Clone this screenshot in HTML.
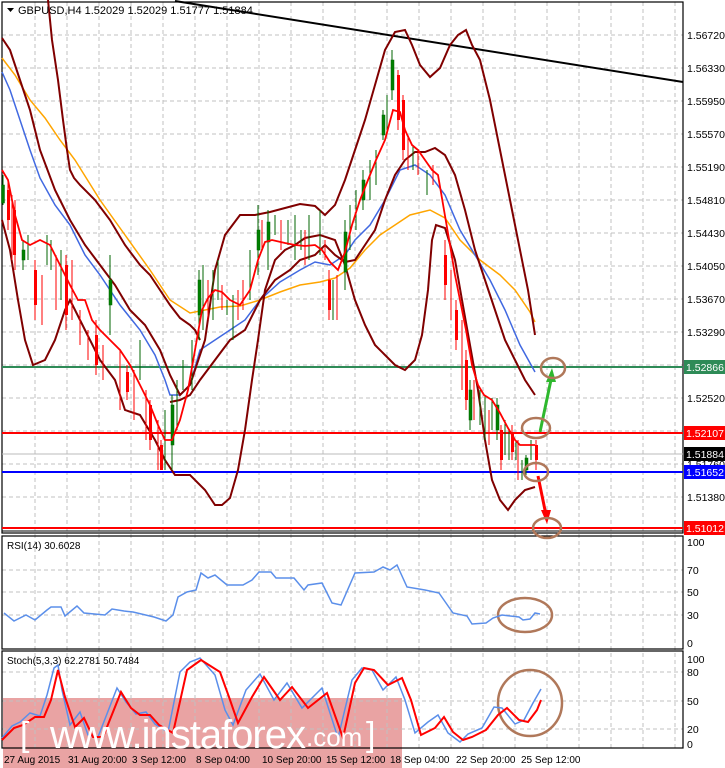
<!DOCTYPE html>
<html><head><meta charset="utf-8"><style>
html,body{margin:0;padding:0;background:#fff;}
svg{display:block;font-family:"Liberation Sans",sans-serif;}
</style></head><body>
<svg width="725" height="768" viewBox="0 0 725 768" xmlns="http://www.w3.org/2000/svg">
<rect width="725" height="768" fill="#fff"/>
<!-- watermark -->
<rect x="3" y="698" width="399" height="70" fill="#e9a3a3"/>
<g stroke="#c0c0c0" stroke-width="1" stroke-dasharray="4,3" fill="none">
<path d="M35 2V748M67 2V748M99 2V748M131 2V748M163 2V748M195 2V748M227 2V748M259 2V748M291 2V748M323 2V748M355 2V748M387 2V748M419 2V748M451 2V748M483 2V748M515 2V748M547 2V748M579 2V748M611 2V748M643 2V748M675 2V748"/>
<path d="M2 35H683M2 68H683M2 101H683M2 134H683M2 167H683M2 200H683M2 233H683M2 266H683M2 299H683M2 332H683M2 365H683M2 398H683M2 431H683M2 464H683M2 497H683"/>
<path d="M2 570H683M2 592H683M2 615H683M2 672H683M2 701H683M2 729H683"/>
</g>
<!-- frames -->
<g stroke="#000" stroke-width="1.2" fill="none">
<rect x="2" y="2" width="681" height="531"/>
<rect x="2" y="536" width="681" height="113"/>
<rect x="2" y="651" width="681" height="97"/>
</g>
<!-- horizontal levels -->
<line x1="2" y1="367" x2="683" y2="367" stroke="#2e8b57" stroke-width="2"/>
<line x1="2" y1="433" x2="683" y2="433" stroke="#f00" stroke-width="2"/>
<line x1="2" y1="454" x2="683" y2="454" stroke="#bbb" stroke-width="1"/>
<line x1="2" y1="472" x2="683" y2="472" stroke="#00f" stroke-width="2"/>
<line x1="2" y1="528" x2="683" y2="528" stroke="#f00" stroke-width="2"/>
<line x1="2" y1="531" x2="683" y2="531" stroke="#000" stroke-width="1"/>
<!-- trendline -->
<line x1="175" y1="1" x2="683" y2="82" stroke="#000" stroke-width="2"/>
<!-- MA orange -->
<polyline fill="none" stroke="#ffa500" stroke-width="1.5" points="2,58 15,75 30,100 45,118 60,140 75,160 100,200 125,235 150,270 170,300 190,313 205,310 220,307 240,306 260,300 280,292 300,285 320,282 335,278 350,268 365,250 380,235 395,225 410,215 430,210 445,218 460,240 480,260 500,275 515,290 530,312 535,322"/>
<!-- MA blue -->
<polyline fill="none" stroke="#4169e1" stroke-width="1.5" points="2,72 10,90 20,120 30,150 40,178 55,205 70,225 85,255 100,275 120,305 140,330 155,355 165,380 170,395 180,395 190,385 200,350 215,340 230,330 245,320 260,300 280,282 300,270 315,262 330,265 345,255 355,240 370,225 385,200 400,170 415,165 430,175 445,195 460,230 475,255 490,280 505,310 520,345 535,372"/>
<!-- Bollinger bands (dark red) -->
<g fill="none" stroke="#800000" stroke-width="2">
<polyline points="2,38 10,50 20,80 30,110 40,150 55,190 70,220 85,245 100,265 115,285 130,310 145,325 160,350 170,375 180,395 190,385 205,340 215,270 225,235 240,215 255,215 270,212 285,208 300,204 315,206 325,215 335,205 345,180 355,150 365,120 375,85 385,50 395,32 405,30 412,45 420,65 430,77 440,68 450,45 458,35 466,30 472,45 480,60 490,100 500,150 510,200 520,250 528,290 535,335"/>
<polyline points="48,0 52,40 58,80 63,120 67,150 70,170 74,178 80,185 95,200 110,220 125,245 140,265 150,275 160,290 170,305 180,318 190,325 195,330 200,340"/>
<polyline points="2,220 10,250 18,300 25,340 33,365 45,360 55,340 65,310 70,300 85,330 100,360 115,380 125,410 140,415 155,440 165,460 175,475 190,475 205,490 215,505 222,505 230,498 238,470 245,430 252,380 258,340 265,290 275,260 285,250 295,245 305,238 320,235 335,240 345,265 355,300 365,325 375,345 385,355 395,365 405,370 415,360 422,335 428,290 432,240 436,225 445,228 455,260 462,300 470,345 478,390 485,440 492,480 500,500 508,510 515,500 525,490 535,487"/>
<polyline points="170,402 180,400 190,395 200,380 215,360 230,340 245,330 260,300 275,280 290,270 300,260 315,255 325,245 335,255 345,262 355,260 365,245 375,230 385,200 395,175 405,160 415,152 425,152 435,148 445,155 455,175 465,210 475,250 485,280 495,310 505,340 515,360 525,380 535,395"/>
</g>
<!-- candles green -->
<g stroke="#006400" stroke-width="1">
<path d="M3 175V205M23 240V270M28 235V260M47 235V265M51 240V270M61 250V300M110 255V335M140 340V380M165 410V470M172 395V470M177 380V430M183 360V390M192 340V390M199 270V340M203 265V330M213 270V320M218 260V300M227 300V315M233 295V340M250 250V300M258 205V275M268 210V270M275 215V235M288 220V245M295 215V260M301 230V250M309 215V260M320 210V255M333 280V320M345 220V290M350 205V250M356 190V230M363 170V210M370 160V200M376 150V185M383 110V140M387 95V130M392 50V100M413 145V170M427 170V195M470 380V430M480 390V425M485 395V440M492 398V430M497 398V440M505 420V455M509 430V460M516 440V460M522 460V480M526 455V475M531 440V460"/>
</g>
<g fill="#008000" stroke="#006400" stroke-width="0.5">
<rect x="1.5" y="185" width="3" height="18"/><rect x="22" y="250" width="3" height="10"/><rect x="109" y="280" width="3" height="25"/><rect x="171" y="405" width="3" height="40"/><rect x="198" y="280" width="3" height="35"/><rect x="257" y="230" width="3" height="20"/><rect x="267" y="222" width="3" height="20"/><rect x="344" y="232" width="3" height="40"/><rect x="362" y="180" width="3" height="20"/><rect x="382" y="115" width="3" height="20"/><rect x="391" y="60" width="3" height="30"/><rect x="469" y="390" width="3" height="30"/><rect x="496" y="405" width="3" height="25"/><rect x="525" y="458" width="3" height="12"/>
</g>
<!-- candles red -->
<g stroke="#f00" stroke-width="1">
<path d="M8 180V230M12 195V260M15 200V270M35 260V320M42 275V325M56 255V310M66 255V330M72 260V320M80 310V345M88 330V360M96 320V375M103 345V380M120 350V410M127 365V400M134 370V420M146 390V440M150 400V450M158 420V470M161 440V470M208 280V320M222 285V310M238 290V320M243 280V310M262 220V250M281 220V250M305 230V265M325 240V260M329 270V320M337 275V320M398 70V130M403 95V160M408 135V170M418 150V175M433 165V185M445 240V300M451 270V320M456 300V350M462 320V390M466 350V410M474 380V420M489 410V445M501 425V470M512 425V460M518 440V480M536 440V470"/>
</g>
<g fill="#f00">
<rect x="7" y="190" width="3" height="30"/><rect x="13" y="210" width="3" height="45"/><rect x="34" y="270" width="3" height="35"/><rect x="65" y="265" width="3" height="50"/><rect x="95" y="335" width="3" height="30"/><rect x="126" y="372" width="3" height="20"/><rect x="149" y="405" width="3" height="35"/><rect x="160" y="445" width="3" height="25"/><rect x="328" y="280" width="3" height="30"/><rect x="397" y="75" width="3" height="45"/><rect x="402" y="100" width="3" height="50"/><rect x="444" y="255" width="3" height="30"/><rect x="455" y="310" width="3" height="30"/><rect x="465" y="360" width="3" height="40"/><rect x="500" y="430" width="3" height="30"/><rect x="511" y="432" width="3" height="20"/><rect x="535" y="445" width="3" height="15"/>
</g>
<!-- fast MA red -->
<polyline fill="none" stroke="#f00" stroke-width="1.8" points="2,170 8,180 15,215 22,240 30,245 40,240 50,245 55,255 60,265 70,285 78,300 85,300 92,320 100,330 110,340 120,350 130,365 140,385 150,405 158,425 165,440 172,440 180,420 188,390 195,350 202,310 208,298 215,290 222,292 230,300 240,305 250,290 258,260 265,242 272,240 285,243 295,245 305,246 315,245 322,250 330,262 338,270 345,252 352,225 360,200 368,180 376,160 385,140 393,110 400,112 405,130 412,145 418,150 425,160 432,170 438,175 444,210 450,245 455,275 460,300 466,330 472,365 478,385 484,395 492,400 500,413 508,428 515,440 520,445 528,445 535,445"/>
<!-- labels right -->
<g font-size="10.5" fill="#000">
<text x="687" y="39">1.56720</text><text x="687" y="72">1.56330</text><text x="687" y="105">1.55950</text><text x="687" y="138">1.55570</text><text x="687" y="171">1.55190</text><text x="687" y="204">1.54810</text><text x="687" y="237">1.54430</text><text x="687" y="270">1.54050</text><text x="687" y="303">1.53670</text><text x="687" y="336">1.53290</text><text x="687" y="402">1.52520</text><text x="687" y="468">1.51760</text><text x="687" y="501">1.51380</text>
</g>
<g font-size="10.5">
<rect x="684" y="360" width="41" height="14" fill="#2e8b57"/><text x="686" y="371" fill="#fff">1.52866</text>
<rect x="684" y="426" width="41" height="14" fill="#f00"/><text x="686" y="437" fill="#fff">1.52107</text>
<rect x="684" y="447" width="41" height="14" fill="#000"/><text x="686" y="458" fill="#fff">1.51884</text>
<rect x="684" y="465" width="41" height="14" fill="#00f"/><text x="686" y="476" fill="#fff">1.51652</text>
<rect x="684" y="521" width="41" height="14" fill="#f00"/><text x="686" y="532" fill="#fff">1.51012</text>
</g>
<g font-size="10.5" fill="#000">
<text x="687" y="546">100</text><text x="687" y="574">70</text><text x="687" y="596">50</text><text x="687" y="619">30</text><text x="687" y="647">0</text>
<text x="687" y="663">100</text><text x="687" y="676">80</text><text x="687" y="705">50</text><text x="687" y="733">20</text><text x="687" y="748">0</text>
</g>
<!-- header -->
<path d="M7 8H14L10.5 12Z" fill="#000"/>
<text x="18" y="14" font-size="11" fill="#000">GBPUSD,H4  1.52029 1.52029 1.51777 1.51884</text>
<!-- arrows & circles -->
<g fill="none" stroke="#2eb82e" stroke-width="3"><line x1="540" y1="432" x2="552" y2="375"/></g>
<path d="M552 368L546 382L556 382Z" fill="#2eb82e"/>
<g fill="none" stroke="#f00" stroke-width="3"><line x1="538" y1="476" x2="546" y2="515"/></g>
<path d="M547 524L541 510L551 510Z" fill="#f00"/>
<g fill="none" stroke="#b0785a" stroke-width="2.5">
<ellipse cx="553" cy="368" rx="12" ry="10"/>
<ellipse cx="536" cy="428" rx="14" ry="10"/>
<ellipse cx="536" cy="472" rx="12" ry="9"/>
<ellipse cx="547" cy="528" rx="14" ry="10"/>
<ellipse cx="525" cy="615" rx="27" ry="17"/>
<ellipse cx="530" cy="703" rx="32" ry="33"/>
</g>
<!-- RSI -->
<text x="7" y="549" font-size="10" fill="#000">RSI(14) 30.6028</text>
<polyline fill="none" stroke="#5b8fea" stroke-width="1.5" points="4,613 14,621 26,615 35,620 47,610 51,607 61,607 65,616 77,606 84,613 105,615 112,609 124,611 133,612 154,617 166,621 173,615 178,597 187,592 196,590 201,573 208,578 215,575 227,585 243,585 252,580 259,572 271,572 276,578 294,578 304,590 308,585 322,583 332,603 341,605 355,573 374,572 383,567 390,570 397,565 407,587 425,590 439,593 453,613 467,616 472,624 486,623 493,618 502,615 519,617 523,620 530,619 535,613 540,614"/>
<!-- Stoch -->
<text x="7" y="664" font-size="10" fill="#000">Stoch(5,3,3) 62.2781 50.7484</text>
<polyline fill="none" stroke="#5b8fea" stroke-width="1.5" points="2,738 12,726 20,722 30,713 40,716 47,695 54,668 58,665 62,690 70,725 80,712 88,735 98,737 117,688 126,702 136,714 146,712 155,724 168,732 180,672 190,662 200,658 215,675 225,710 233,725 246,690 260,674 274,700 287,683 302,708 322,688 338,738 352,680 362,668 372,670 383,690 396,677 405,700 415,733 428,722 438,715 448,733 460,742 468,734 482,728 494,707 502,708 515,724 524,720 533,703 541,689"/>
<polyline fill="none" stroke="#f00" stroke-width="2" points="2,740 14,728 23,725 35,717 44,717 51,700 58,670 65,697 75,727 84,718 93,737 103,737 121,692 131,708 140,715 150,715 159,725 173,733 187,670 201,660 220,672 229,697 238,723 252,697 264,677 280,700 292,687 308,708 327,693 343,738 355,683 364,668 374,670 388,685 402,678 411,700 421,735 435,728 444,717 453,732 463,740 472,737 486,730 498,715 507,708 519,720 528,722 537,710 541,700"/>
<!-- watermark text -->
<text x="20" y="746" font-size="34" fill="#fff" font-weight="normal">[</text>
<text x="50" y="748" font-size="40" fill="#fff" letter-spacing="-1">www.instaforex</text>
<text x="306" y="746" font-size="26" fill="#fff">.com</text>
<text x="366" y="746" font-size="34" fill="#fff">]</text>
<!-- date axis -->
<g font-size="10" fill="#000">
<text x="4" y="763">27 Aug 2015</text><text x="68" y="763">31 Aug 20:00</text><text x="132" y="763">3 Sep 12:00</text><text x="196" y="763">8 Sep 04:00</text><text x="262" y="763">10 Sep 20:00</text><text x="326" y="763">15 Sep 12:00</text><text x="390" y="763">18 Sep 04:00</text><text x="456" y="763">22 Sep 20:00</text><text x="521" y="763">25 Sep 12:00</text>
</g>
</svg>
</body></html>
